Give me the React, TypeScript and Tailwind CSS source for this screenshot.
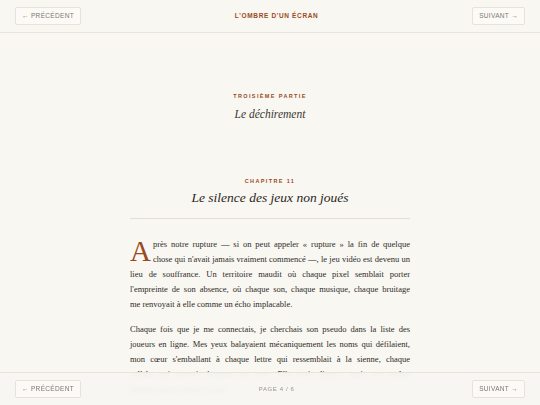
import React from "react";

const serif = { fontFamily: '"Liberation Serif", "Times New Roman", serif' };

function NavButton({ children }: { children: React.ReactNode }) {
  return (
    <button className="h-[18px] px-[6px] rounded-[2px] border border-[#e7e3da] bg-[#fbfaf6] text-[6.5px] tracking-[0.05em] text-[#7d7870] font-['Liberation_Sans',Arial,sans-serif] leading-none">
      {children}
    </button>
  );
}

const para1 = [
  "près notre rupture — si on peut appeler « rupture » la fin de quelque",
  "chose qui n'avait jamais vraiment commencé —, le jeu vidéo est devenu un",
  "lieu de souffrance. Un territoire maudit où chaque pixel semblait porter",
  "l'empreinte de son absence, où chaque son, chaque musique, chaque bruitage",
];
const para1Last = "me renvoyait à elle comme un écho implacable.";

const para2 = [
  "Chaque fois que je me connectais, je cherchais son pseudo dans la liste des",
  "joueurs en ligne. Mes yeux balayaient mécaniquement les noms qui défilaient,",
  "mon cœur s'emballant à chaque lettre qui ressemblait à la sienne, chaque",
  "syllabe qui pouvait évoquer son nom. Elle avait disparu, mais son ombre",
];
const para2Last = "hantait encore chaque écran.";

export default function App() {
  return (
    <div className="min-h-[405px] bg-[#f9f7f2] text-[#2f2b27] relative">
      <header className="h-[33px] border-b border-[#e8e4db] flex items-center justify-between px-[15px]">
        <NavButton>← PRÉCÉDENT</NavButton>
        <div className="text-[6.5px] font-bold tracking-[0.1em] text-[#9a4a1f] font-['Liberation_Sans',Arial,sans-serif]">
          L'OMBRE D'UN ÉCRAN
        </div>
        <NavButton>SUIVANT →</NavButton>
      </header>

      <main className="w-[280px] mx-auto pt-[59px] pb-[60px]">
        <div className="text-center text-[5.5px] leading-[8px] font-bold tracking-[0.25em] text-[#9a4a1f] font-['Liberation_Sans',Arial,sans-serif]">
          TROISIÈME PARTIE
        </div>
        <div className="mt-[7px] text-center italic text-[11.5px] leading-[14px] text-[#3a3631]" style={serif}>
          Le déchirement
        </div>

        <div className="mt-[56px] text-center text-[5.5px] leading-[8px] font-bold tracking-[0.25em] text-[#9a4a1f] font-['Liberation_Sans',Arial,sans-serif]">
          CHAPITRE 11
        </div>
        <h1 className="mt-[4px] text-center italic text-[13.5px] leading-[18px] text-[#2a2622]" style={serif}>
          Le silence des jeux non joués
        </h1>
        <div className="mt-[11px] border-t border-[#e3dfd6]" />

        <div className="mt-[18px] text-[8.5px] leading-[15px] text-[#2f2b27]" style={serif}>
          <p>
            <span className="float-left text-[29px] leading-[26px] mt-[1px] mr-[2px] text-[#9a4a1f]">A</span>
            {para1.map((l, i) => (
              <span key={i} className="block [text-align-last:justify] text-justify whitespace-nowrap">
                {l}
              </span>
            ))}
            <span className="block">{para1Last}</span>
          </p>
          <p className="mt-[10px]">
            {para2.map((l, i) => (
              <span key={i} className="block [text-align-last:justify] text-justify whitespace-nowrap">
                {l}
              </span>
            ))}
            <span className="block">{para2Last}</span>
          </p>
        </div>
      </main>

      <footer className="fixed bottom-0 left-0 right-0 h-[33px] border-t border-[#e8e4db] bg-[#f8f6f1]/95 backdrop-blur-[2px] flex items-center justify-between px-[15px]">
        <NavButton>← PRÉCÉDENT</NavButton>
        <div className="text-[6px] tracking-[0.1em] text-[#9a958d] font-['Liberation_Sans',Arial,sans-serif]">
          PAGE 4 / 6
        </div>
        <NavButton>SUIVANT →</NavButton>
      </footer>
    </div>
  );
}
